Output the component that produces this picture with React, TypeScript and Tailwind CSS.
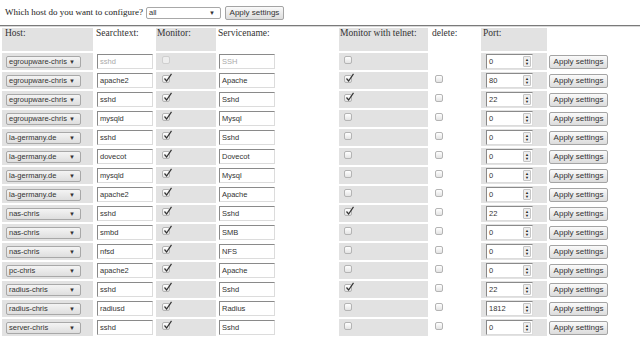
import React from "react";

type Row = {
  host: string;
  search: string;
  mon: boolean;
  svc: string;
  tel: boolean;
  del: boolean | null;
  port: string;
  disabled?: boolean;
};

const rows: Row[] = [
  { host: "egroupware-chris", search: "sshd", mon: false, svc: "SSH", tel: false, del: null, port: "0", disabled: true },
  { host: "egroupware-chris", search: "apache2", mon: true, svc: "Apache", tel: true, del: false, port: "80" },
  { host: "egroupware-chris", search: "sshd", mon: true, svc: "Sshd", tel: true, del: false, port: "22" },
  { host: "egroupware-chris", search: "mysqld", mon: true, svc: "Mysql", tel: false, del: false, port: "0" },
  { host: "la-germany.de", search: "sshd", mon: true, svc: "Sshd", tel: false, del: false, port: "0" },
  { host: "la-germany.de", search: "dovecot", mon: true, svc: "Dovecot", tel: false, del: false, port: "0" },
  { host: "la-germany.de", search: "mysqld", mon: true, svc: "Mysql", tel: false, del: false, port: "0" },
  { host: "la-germany.de", search: "apache2", mon: true, svc: "Apache", tel: false, del: false, port: "0" },
  { host: "nas-chris", search: "sshd", mon: true, svc: "Sshd", tel: true, del: false, port: "22" },
  { host: "nas-chris", search: "smbd", mon: true, svc: "SMB", tel: false, del: false, port: "0" },
  { host: "nas-chris", search: "nfsd", mon: true, svc: "NFS", tel: false, del: false, port: "0" },
  { host: "pc-chris", search: "apache2", mon: true, svc: "Apache", tel: false, del: false, port: "0" },
  { host: "radius-chris", search: "sshd", mon: true, svc: "Sshd", tel: true, del: false, port: "22" },
  { host: "radius-chris", search: "radiusd", mon: true, svc: "Radius", tel: false, del: false, port: "1812" },
  { host: "server-chris", search: "sshd", mon: true, svc: "Sshd", tel: false, del: false, port: "0" },
];

const sans = "font-['Liberation_Sans',Arial,sans-serif]";
const serif = "font-['Liberation_Serif','Times_New_Roman',serif]";

function Select({ value, white }: { value: string; white?: boolean }) {
  return (
    <div
      className={`flex h-[12px] w-[75px] items-center justify-between rounded-[2px] border border-[#a8a8a8] pl-[2px] pr-[5px] text-[7.5px] leading-none text-[#333] ${sans} ${
        white ? "bg-white" : "bg-gradient-to-b from-[#f4f4f4] to-[#dedede]"
      }`}
    >
      <span>{value}</span>
      <span className="text-[6px] text-[#333]">▼</span>
    </div>
  );
}

function TextInput({ value, disabled }: { value: string; disabled?: boolean }) {
  return (
    <div
      className={`flex h-[15px] w-[56px] items-center border border-t-[#8a8a8a] border-l-[#8a8a8a] border-r-[#dcdcdc] border-b-[#dcdcdc] bg-white pl-[2px] text-[7.5px] leading-none ${sans} ${
        disabled ? "text-[#aaa]" : "text-[#333]"
      }`}
    >
      {value}
    </div>
  );
}

function NumInput({ value }: { value: string }) {
  return (
    <div
      className={`flex h-[15px] w-[47px] items-center justify-between border border-t-[#8a8a8a] border-l-[#8a8a8a] border-r-[#dcdcdc] border-b-[#dcdcdc] bg-white pl-[2px] text-[7.5px] leading-none text-[#333] ${sans}`}
    >
      <span>{value}</span>
      <span className="mr-[1px] flex h-[11px] w-[8px] flex-col items-center justify-center rounded-[1px] border border-[#c4c4c4] bg-[#eee] text-[4px] leading-[4px] text-[#222]">
        <span>▲</span>
        <span>▼</span>
      </span>
    </div>
  );
}

function Button() {
  return (
    <button
      className={`flex h-[14px] w-[59px] items-center justify-center rounded-[2px] border border-[#a4a4a4] bg-gradient-to-b from-[#fafafa] to-[#dcdcdc] text-[8px] leading-none text-[#333] ${sans}`}
    >
      Apply settings
    </button>
  );
}

function Check({ checked, disabled }: { checked: boolean; disabled?: boolean }) {
  return (
    <span
      className={`relative -mt-[3px] block h-[8px] w-[8px] rounded-[2px] border ${
        disabled ? "border-[#cfcfcf] bg-[#eee]" : "border-[#b4b4b4] bg-gradient-to-b from-white to-[#e4e4e4]"
      }`}
    >
      {checked && (
        <svg className="absolute -top-[3px] left-0" width="10" height="10" viewBox="0 0 10 10">
          <path d="M1.5 5.5 L3.6 8 L8.5 0.8" fill="none" stroke="#333" strokeWidth="1.2" />
        </svg>
      )}
    </span>
  );
}

function Cell({ children, pl, g }: { children?: React.ReactNode; pl: string; g?: boolean }) {
  return (
    <td className={`p-0 align-middle ${g ? "bg-[#e2e2e2]" : ""}`}>
      <div className={`flex h-[17px] items-center ${pl}`}>{children}</div>
    </td>
  );
}

export default function App() {
  const gray = "bg-[#e2e2e2]";
  return (
    <div className="h-[338px] w-[640px] overflow-hidden bg-white">
      <div className={`flex h-[25px] items-center pl-[5px] text-[9px] text-[#222] ${serif}`}>
        <span>Which host do you want to configure?</span>
        <div className="ml-[3px]">
          <Select value="all" white />
        </div>
        <div className="ml-[4px]">
          <Button />
        </div>
      </div>
      <div className="h-[1px] w-full bg-[#7a7a7a]" />
      <div className="h-[1px] w-full bg-[#d8d8d8]" />
      <table className="-mt-[1px] border-separate border-spacing-[2px] leading-none">
        <thead>
          <tr className={`h-[23px] text-[9.5px] leading-[11px] text-[#333] ${serif}`}>
            <th className={`w-[91px] p-0 pl-[3px] text-left align-top font-normal ${gray}`}>Host:</th>
            <th className="w-[59px] p-0 pl-[1px] text-left align-top font-normal">Searchtext:</th>
            <th className={`w-[60px] p-0 pl-[1px] text-left align-top font-normal ${gray}`}>Monitor:</th>
            <th className="w-[119px] p-0 text-left align-top font-normal">Servicename:</th>
            <th className={`w-[89px] p-0 pl-[1px] text-left align-top font-normal ${gray}`}>Monitor with telnet:</th>
            <th className="w-[49px] p-0 pl-[2px] text-left align-top font-normal">delete:</th>
            <th className={`w-[66px] p-0 pl-[2px] text-left align-top font-normal ${gray}`}>Port:</th>
            <th className="w-[63px] p-0" />
          </tr>
        </thead>
        <tbody>
          {rows.map((r, i) => (
            <tr key={i}>
              <Cell pl="pl-[4px]" g>
                <Select value={r.host} />
              </Cell>
              <Cell pl="pl-[2px]">
                <TextInput value={r.search} disabled={r.disabled} />
              </Cell>
              <Cell pl="pl-[6px]" g>
                <Check checked={r.mon} disabled={r.disabled} />
              </Cell>
              <Cell pl="pl-[1px]">
                <TextInput value={r.svc} disabled={r.disabled} />
              </Cell>
              <Cell pl="pl-[5px]" g>
                <Check checked={r.tel} />
              </Cell>
              <Cell pl="pl-[5px]">{r.del !== null && <Check checked={r.del} />}</Cell>
              <Cell pl="pl-[5px]" g>
                <NumInput value={r.port} />
              </Cell>
              <Cell pl="pl-0">
                <Button />
              </Cell>
            </tr>
          ))}
        </tbody>
      </table>
    </div>
  );
}
